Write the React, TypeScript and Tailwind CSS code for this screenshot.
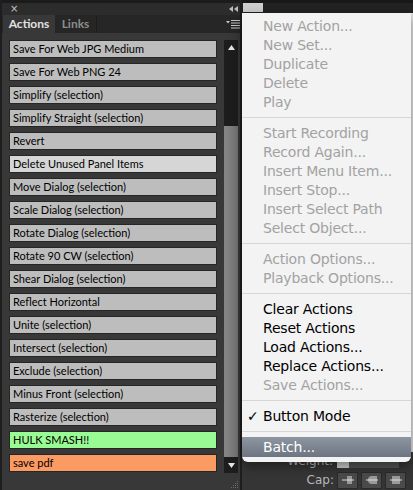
import React from 'react';

type Tone = 'gray' | 'light' | 'green' | 'orange';

const ACTIONS: { label: string; tone: Tone }[] = [
  { label: 'Save For Web JPG Medium', tone: 'gray' },
  { label: 'Save For Web PNG 24', tone: 'gray' },
  { label: 'Simplify (selection)', tone: 'gray' },
  { label: 'Simplify Straight (selection)', tone: 'gray' },
  { label: 'Revert', tone: 'gray' },
  { label: 'Delete Unused Panel Items', tone: 'light' },
  { label: 'Move Dialog (selection)', tone: 'gray' },
  { label: 'Scale Dialog (selection)', tone: 'gray' },
  { label: 'Rotate Dialog (selection)', tone: 'gray' },
  { label: 'Rotate 90 CW (selection)', tone: 'gray' },
  { label: 'Shear Dialog (selection)', tone: 'gray' },
  { label: 'Reflect Horizontal', tone: 'gray' },
  { label: 'Unite (selection)', tone: 'gray' },
  { label: 'Intersect (selection)', tone: 'gray' },
  { label: 'Exclude (selection)', tone: 'gray' },
  { label: 'Minus Front (selection)', tone: 'gray' },
  { label: 'Rasterize (selection)', tone: 'gray' },
  { label: 'HULK SMASH!!', tone: 'green' },
  { label: 'save pdf', tone: 'orange' },
];

const toneClass: Record<Tone, string> = {
  gray: 'bg-[#bdbdbd]',
  light: 'bg-[#d6d6d6]',
  green: 'bg-[#99fb93]',
  orange: 'bg-[#fc9a63]',
};

type MenuEntry =
  | { kind: 'item'; label: string; disabled?: boolean; checked?: boolean; active?: boolean }
  | { kind: 'sep' };

const MENU: MenuEntry[] = [
  { kind: 'item', label: 'New Action...', disabled: true },
  { kind: 'item', label: 'New Set...', disabled: true },
  { kind: 'item', label: 'Duplicate', disabled: true },
  { kind: 'item', label: 'Delete', disabled: true },
  { kind: 'item', label: 'Play', disabled: true },
  { kind: 'sep' },
  { kind: 'item', label: 'Start Recording', disabled: true },
  { kind: 'item', label: 'Record Again...', disabled: true },
  { kind: 'item', label: 'Insert Menu Item...', disabled: true },
  { kind: 'item', label: 'Insert Stop...', disabled: true },
  { kind: 'item', label: 'Insert Select Path', disabled: true },
  { kind: 'item', label: 'Select Object...', disabled: true },
  { kind: 'sep' },
  { kind: 'item', label: 'Action Options...', disabled: true },
  { kind: 'item', label: 'Playback Options...', disabled: true },
  { kind: 'sep' },
  { kind: 'item', label: 'Clear Actions' },
  { kind: 'item', label: 'Reset Actions' },
  { kind: 'item', label: 'Load Actions...' },
  { kind: 'item', label: 'Replace Actions...' },
  { kind: 'item', label: 'Save Actions...', disabled: true },
  { kind: 'sep' },
  { kind: 'item', label: 'Button Mode', checked: true },
  { kind: 'sep' },
  { kind: 'item', label: 'Batch...', active: true },
];

const FlyoutIcon = () => (
  <svg width="14" height="10" viewBox="0 0 14 10" fill="#c8c8c8">
    <path d="M0 2h4l-2 2.5z" />
    <rect x="5" y="1" width="9" height="1" />
    <rect x="5" y="3.5" width="9" height="1" />
    <rect x="5" y="6" width="9" height="1" />
    <rect x="5" y="8.5" width="9" height="1" />
  </svg>
);

const CollapseIcon = () => (
  <svg width="9" height="6" viewBox="0 0 9 6" fill="#bdbdbd">
    <path d="M0 3l4-3v6z" />
    <path d="M5 3l4-3v6z" />
  </svg>
);

const Grip = () => (
  <svg width="8" height="8" viewBox="0 0 8 8" fill="#6a6a6a">
    <rect x="6" y="0" width="1" height="1" />
    <rect x="4" y="2" width="1" height="1" />
    <rect x="6" y="2" width="1" height="1" />
    <rect x="2" y="4" width="1" height="1" />
    <rect x="4" y="4" width="1" height="1" />
    <rect x="6" y="4" width="1" height="1" />
    <rect x="0" y="6" width="1" height="1" />
    <rect x="2" y="6" width="1" height="1" />
    <rect x="4" y="6" width="1" height="1" />
    <rect x="6" y="6" width="1" height="1" />
  </svg>
);

const CapButton = ({ variant }: { variant: 0 | 1 | 2 }) => (
  <div className="w-[21px] h-[17px] bg-[#4a4a4a] border border-[#2a2a2a] flex items-center justify-center">
    <svg width="12" height="10" viewBox="0 0 12 10" fill="#9a9a9a">
      {variant === 0 && <rect x="5" y="1" width="5" height="8" />}
      {variant === 1 && <path d="M6 1h5v8H6a4 4 0 0 1 0-8z" />}
      {variant === 2 && <rect x="2" y="1" width="8" height="8" />}
      <rect x="0" y="4.5" width="12" height="1" fill="#dcdcdc" />
    </svg>
  </div>
);

export default function App() {
  return (
    <div
      className="relative w-[413px] h-[490px] overflow-hidden bg-[#2a2a2a] flex"
      style={{ fontFamily: '"DejaVu Sans", sans-serif' }}
    >
      {/* Actions panel */}
      <div className="w-[242px] h-full flex flex-col border-l-2 border-r-2 border-[#1e1e1e]">
        <div className="h-[15px] shrink-0 bg-[#2c2c2c] border-t-[3px] border-[#1b1b1b] flex items-center justify-between pl-[8px] pr-[2px]">
          <span className="text-[10px] leading-none text-[#c4c4c4]">×</span>
          <CollapseIcon />
        </div>
        <div className="h-[18px] shrink-0 bg-[#262626] flex items-stretch">
          <div
            className="w-[52px] ml-[1px] bg-[#383838] flex items-center justify-center text-[12px] font-bold text-[#e2e2e2]"
            style={{ fontFamily: 'Lato, sans-serif' }}
          >
            Actions
          </div>
          <div
            className="w-[42px] border-r border-[#1c1c1c] flex items-center justify-center text-[12px] font-bold text-[#8c8c8c]"
            style={{ fontFamily: 'Lato, sans-serif' }}
          >
            Links
          </div>
          <div className="flex-1 flex items-center justify-end">
            <FlyoutIcon />
          </div>
        </div>
        <div className="flex-1 bg-[#383838] relative flex pt-[7px] pl-[7px]">
          <div className="w-[208px] flex flex-col gap-[5px]">
            {ACTIONS.map((a) => (
              <div
                key={a.label}
                className={`h-[18px] border border-[#262626] pl-[3px] flex items-center text-[11px] text-black ${toneClass[a.tone]}`}
                style={{ fontFamily: 'Lato, sans-serif' }}
              >
                {a.label}
              </div>
            ))}
          </div>
          <div className="ml-[7px] w-[14px] h-[433px] flex flex-col bg-[#1d1d1d]">
            <div className="h-[15px] flex items-center justify-center">
              <svg width="7" height="5" viewBox="0 0 7 5" fill="#e6e6e6">
                <path d="M3.5 0L7 5H0z" />
              </svg>
            </div>
            <div className="h-[71px]" />
            <div className="flex-1 bg-gradient-to-r from-[#868686] to-[#747474]" />
            <div className="h-[16px] flex items-center justify-center">
              <svg width="7" height="5" viewBox="0 0 7 5" fill="#e6e6e6">
                <path d="M0 0h7L3.5 5z" />
              </svg>
            </div>
          </div>
          <div className="absolute right-[1px] bottom-[1px]">
            <Grip />
          </div>
        </div>
      </div>

      {/* Area behind the menu */}
      <div className="flex-1 h-full flex flex-col">
        <div className="h-[13px] shrink-0 bg-[#222222] border-t-[3px] border-[#181818] pl-[1px]">
          <div className="w-[20px] h-[9px] bg-[#cfcfcf]" />
        </div>
        <div className="flex-1 bg-[#e4e4e6]" />
        <div className="h-[38px] shrink-0 bg-[#353535] flex flex-col pl-[20px] pt-[2px] gap-[3px]">
          <div className="flex items-center h-[14px]">
            <span className="w-[71px] text-right text-[12px] text-[#b8b8b8]">Weight:</span>
            <div className="ml-[4px] w-[12px] h-[14px] bg-[#cfcfcf]" />
            <div className="w-[50px] h-[14px] bg-[#555555]" />
          </div>
          <div className="flex items-center gap-[3px]">
            <span className="w-[72px] text-right text-[12px] text-[#b8b8b8]">Cap:</span>
            <CapButton variant={0} />
            <CapButton variant={1} />
            <CapButton variant={2} />
          </div>
        </div>
      </div>

      {/* Flyout menu */}
      <div className="absolute left-[242px] top-[13px] w-[169px] bg-[#f3f3f4] rounded-b-[6px] shadow-[0_4px_12px_rgba(0,0,0,0.45)] pt-[3px] pb-[5px] flex flex-col overflow-hidden">
        {MENU.map((m, i) =>
          m.kind === 'sep' ? (
            <div key={i} className="h-[12px] flex items-center">
              <div className="w-full h-px bg-[#d6d6d6]" />
            </div>
          ) : (
            <div
              key={i}
              className={`flex items-center text-[14px] leading-none tracking-[-0.2px] ${
                m.active
                  ? 'h-[20px] bg-gradient-to-b from-[#8d96a1] to-[#6c7581] text-white'
                  : m.disabled
                  ? 'h-[19px] text-[#a2a2a2]'
                  : 'h-[19px] text-black'
              }`}
            >
              <span className="w-[21px] shrink-0 pl-[5px] text-[14px]">{m.checked ? '✓' : ''}</span>
              <span>{m.label}</span>
            </div>
          )
        )}
      </div>
    </div>
  );
}
